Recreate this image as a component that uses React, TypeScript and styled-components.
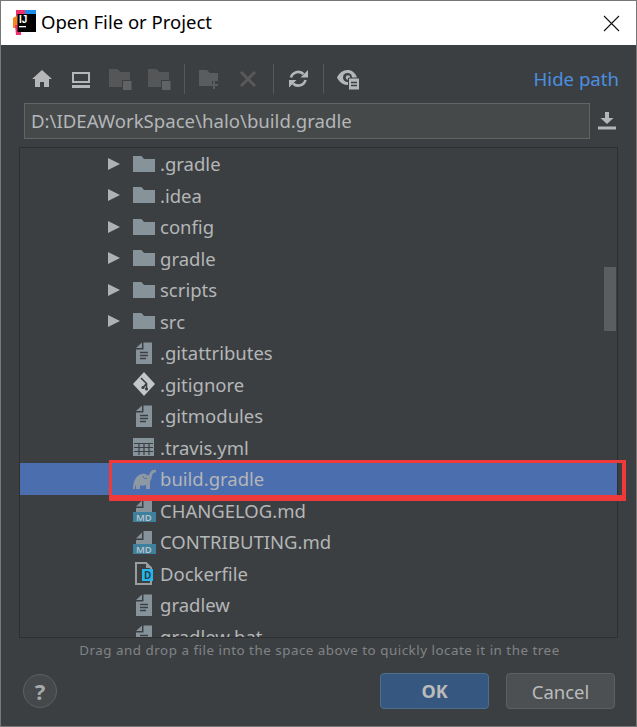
import React, { ReactElement } from "react";
import styled, { createGlobalStyle } from "styled-components";

const GlobalStyle = createGlobalStyle`
  html, body {
    margin: 0;
    padding: 0;
    background: #3c3f41;
  }
`;

const FONT = `"Noto Sans", "Open Sans", sans-serif`;

function Folder() {
  return (
    <svg width="22" height="18" viewBox="0 0 22 18">
      <path d="M0 1h8.500l2.500 3H22V17H0z" fill="#87939a" />
    </svg>
  );
}

function TextFile() {
  return (
    <svg width="22" height="24" viewBox="0 0 22 24">
      <path d="M10.500 1.500H19V23H3V8.500h7.500z" fill="#87939a" />
      <path d="M3 7 9 1.500V7z" fill="#87939a" />
      <path d="M7 11.500h8M7 14.500h8M7 17.500h6" stroke="#3c3f41" strokeWidth="1.300" />
    </svg>
  );
}

function GitFile() {
  return (
    <svg width="22" height="24" viewBox="0 0 22 24">
      <path d="M11 0 22 12 11 24 0 12z" fill="#c4c6c8" />
      <path d="M8 6l5.500 5.500V17M13.500 11.500 10 15.500" stroke="#3c3f41" strokeWidth="1.600" fill="none" />
      <circle cx="10" cy="15.500" r="1.600" fill="#3c3f41" />
      <circle cx="13.500" cy="17" r="1.600" fill="#3c3f41" />
    </svg>
  );
}

function TableFile() {
  return (
    <svg width="22" height="18" viewBox="0 0 22 18">
      <path d="M0 0h21v18H0z" fill="#87939a" />
      <path d="M1 5.500h19M1 9.500h19M1 13.500h19M6 5.500V17M11 5.500V17M16 5.500V17" stroke="#3c3f41" strokeWidth="1.200" />
    </svg>
  );
}

function Elephant() {
  return (
    <svg width="23" height="20" viewBox="0 0 23 20">
      <path
        d="M0 20C0 12 3 6 9 5c2-.4 4 0 5 1 1.500 1 2 .5 3-2 1-2.500 3-4 6-3v2.500c-2.500-.5-3.500 1-4 3.500-.5 3-1.500 4.500-2 6V20h-4v-4c-3 1-5 1-6 0v4H3v-4c-1 1-1 2.500-1 4z"
        fill="#8d98a3"
      />
      <path d="M10 7c.5 2 2 3 4 2.500" stroke="#4b6eaf" strokeWidth="1" fill="none" />
    </svg>
  );
}

function MdFile() {
  return (
    <svg width="23" height="24" viewBox="0 0 23 24">
      <path d="M3 8.500 9 2.500v6z" fill="#87939a" />
      <path d="M10.500 1H19v13H3v-4h7.500z" fill="#87939a" />
      <rect x="0" y="14" width="23" height="10" fill="#3d7f9c" />
      <text x="3" y="22.600" fontSize="9.500" fontWeight="600" fontFamily="Noto Sans, sans-serif" fill="#b9c3c9">
        MD
      </text>
    </svg>
  );
}

function DockerFile() {
  return (
    <svg width="22" height="24" viewBox="0 0 22 24">
      <path d="M3 2h10l5 5v16H3z" fill="none" stroke="#9a9c9e" strokeWidth="2" />
      <path d="M13 1l6 6h-6z" fill="#9a9c9e" />
      <rect x="9" y="8" width="11" height="12" fill="#25b7ea" />
      <text x="11" y="18" fontSize="10" fontWeight="700" fontFamily="Noto Sans, sans-serif" fill="#2b3f4c">
        D
      </text>
    </svg>
  );
}

type Entry = { name: string; kind: "folder" | "text" | "git" | "table" | "gradle" | "md" | "docker"; selected?: boolean };

const ENTRIES: Entry[] = [
  { name: ".gradle", kind: "folder" },
  { name: ".idea", kind: "folder" },
  { name: "config", kind: "folder" },
  { name: "gradle", kind: "folder" },
  { name: "scripts", kind: "folder" },
  { name: "src", kind: "folder" },
  { name: ".gitattributes", kind: "text" },
  { name: ".gitignore", kind: "git" },
  { name: ".gitmodules", kind: "text" },
  { name: ".travis.yml", kind: "table" },
  { name: "build.gradle", kind: "gradle", selected: true },
  { name: "CHANGELOG.md", kind: "md" },
  { name: "CONTRIBUTING.md", kind: "md" },
  { name: "Dockerfile", kind: "docker" },
  { name: "gradlew", kind: "text" },
  { name: "gradlew.bat", kind: "text" },
];

function EntryIcon({ kind }: { kind: Entry["kind"] }) {
  if (kind === "folder") return <Folder />;
  if (kind === "git") return <GitFile />;
  if (kind === "table") return <TableFile />;
  if (kind === "gradle") return <Elephant />;
  if (kind === "md") return <MdFile />;
  if (kind === "docker") return <DockerFile />;
  return <TextFile />;
}

export default function App(): ReactElement {
  return (
    <>
      <GlobalStyle />
      <Dialog>
        <TitleBar>
          <Logo viewBox="0 0 24 24" width="24" height="24">
            <path d="M3 -1h9v9H3z" fill="#f0306d" />
            <path d="M0 7l5-3v13H0z" fill="#f7841f" />
            <path d="M12 -1h11v11H12z" fill="#1f8ceb" />
            <path d="M2 14h6v10H3z" fill="#f0306d" />
            <rect x="4.500" y="3" width="18.500" height="18" fill="#000" />
            <text x="6" y="11.500" fontSize="10" fontWeight="700" fontFamily="Liberation Sans, sans-serif" fill="#fff">
              IJ
            </text>
            <rect x="6" y="15" width="7" height="1.300" fill="#fff" />
          </Logo>
          <Title>Open File or Project</Title>
          <CloseIcon width="17" height="17" viewBox="0 0 17 17">
            <path d="M1 1l15 15M16 1 1 16" stroke="#111" strokeWidth="1.100" fill="none" />
          </CloseIcon>
        </TitleBar>
        <Body>
          <Toolbar>
            <Tools>
              <ToolIcon width="24" height="24" viewBox="0 0 24 24">
                <path d="M12 3 2 12h3v8h5v-5h4v5h5v-8h3z" fill="#b4b6b8" />
              </ToolIcon>
              <ToolIcon width="24" height="24" viewBox="0 0 24 24">
                <path d="M3 5h18v11H3zM5 7v7h14V7z" fill="#b4b6b8" fillRule="evenodd" />
                <path d="M3 18h18v3H3z" fill="#b4b6b8" />
              </ToolIcon>
              <ToolIcon width="24" height="24" viewBox="0 0 24 24">
                <path d="M1 2h8.500l3 3H22v8h-8v7H1z" fill="#545658" />
                <path d="M15 14h8.500v9H15z" fill="#616263" />
              </ToolIcon>
              <ToolIcon width="24" height="24" viewBox="0 0 24 24">
                <path d="M1 2h8.500l3 3H22v8h-8v7H1z" fill="#545658" />
                <path d="M15 14h8.500v9H15z" fill="#616263" />
              </ToolIcon>
              <ToolDivider />
              <ToolIcon width="24" height="24" viewBox="0 0 24 24">
                <path d="M2 3h8l3 3h8v8h-6v5H2z" fill="#5b5c5e" />
                <path d="M18 14v3h3v2h-3v3h-2v-3h-3v-2h3v-3z" fill="#5b5c5e" />
              </ToolIcon>
              <ToolIcon width="24" height="24" viewBox="0 0 24 24">
                <path d="M5 5l14 14M19 5 5 19" stroke="#59595a" strokeWidth="3" fill="none" />
              </ToolIcon>
              <ToolDivider />
              <ToolIcon width="24" height="24" viewBox="0 0 24 24">
                <path d="M5 10.500A7.500 7.500 0 0 1 17.500 7M19.500 13A7.500 7.500 0 0 1 7 16.500" stroke="#b4b6b8" strokeWidth="2.600" fill="none" />
                <path d="M22 3v7.500h-7.500zM3 20.500V13h7.500z" fill="#b4b6b8" />
              </ToolIcon>
              <ToolDivider />
              <ToolIcon width="24" height="24" viewBox="0 0 24 24">
                <path d="M1 10.500C3 6 7 3 11.500 3S19 5.500 21 10.500L11.500 18C7 18 3 15 1 10.500z" fill="#b4b6b8" />
                <circle cx="11.500" cy="10.500" r="4.500" fill="#3c3f41" />
                <circle cx="12" cy="10.500" r="2.200" fill="#b4b6b8" />
                <path d="M12.500 11h11v12h-11z" fill="#b4b6b8" stroke="#3c3f41" strokeWidth="1" />
                <path d="M15 15.500h6M15 18.500h6" stroke="#3c3f41" strokeWidth="1.400" />
              </ToolIcon>
            </Tools>
            <HidePath>Hide path</HidePath>
          </Toolbar>
          <PathRow>
            <PathField>D:\IDEAWorkSpace\halo\build.gradle</PathField>
            <svg width="18" height="18" viewBox="0 0 18 18">
              <path d="M7 0h4v6h4.500L9 12 2.500 6H7z" fill="#b4b6b8" />
              <path d="M0 14.500h18v3H0z" fill="#b4b6b8" />
            </svg>
          </PathRow>
          <TreeArea>
            <Tree>
              {ENTRIES.map((entry) => (
                <Row key={entry.name} $selected={entry.selected}>
                  <Arrow $visible={entry.kind === "folder"} />
                  <IconSlot>
                    <EntryIcon kind={entry.kind} />
                  </IconSlot>
                  <RowName>{entry.name}</RowName>
                </Row>
              ))}
              <ScrollThumb />
            </Tree>
            <Highlight />
          </TreeArea>
          <DropHint>Drag and drop a file into the space above to quickly locate it in the tree</DropHint>
          <Footer>
            <HelpButton>?</HelpButton>
            <Buttons>
              <OkButton>OK</OkButton>
              <CancelButton>Cancel</CancelButton>
            </Buttons>
          </Footer>
        </Body>
      </Dialog>
    </>
  );
}

const Dialog = styled.div`
  display: flex;
  flex-direction: column;
  width: 637px;
  height: 727px;
  box-sizing: border-box;
  border: 1px solid #777;
  font-family: ${FONT};
  overflow: hidden;
`;

const TitleBar = styled.div`
  display: flex;
  align-items: center;
  height: 44px;
  flex-shrink: 0;
  padding: 0 16px 0 12px;
  background: #fff;
`;

const Logo = styled.svg`
  flex-shrink: 0;
  overflow: visible;
`;

const Title = styled.div`
  margin-left: 4px;
  padding-bottom: 3px;
  flex: 1;
  font-size: 18.500px;
  color: #000;
`;

const CloseIcon = styled.svg`
  flex-shrink: 0;
`;

const Body = styled.div`
  flex: 1;
  display: flex;
  flex-direction: column;
  background: #3c3f41;
  min-height: 0;
`;

const Toolbar = styled.div`
  display: flex;
  align-items: center;
  justify-content: space-between;
  height: 58px;
  flex-shrink: 0;
  padding: 9px 17px 0 29px;
  box-sizing: border-box;
`;

const Tools = styled.div`
  display: flex;
  align-items: center;
  gap: 15px;
`;

const ToolIcon = styled.svg`
  flex-shrink: 0;
`;

const ToolDivider = styled.div`
  width: 1px;
  height: 30px;
  margin: 0 -2.500px;
  background: #56585a;
`;

const HidePath = styled.div`
  font-size: 18.600px;
  color: #4b8fe0;
`;

const PathRow = styled.div`
  display: flex;
  align-items: center;
  gap: 8px;
  flex-shrink: 0;
  padding: 0 20px 0 23px;
`;

const PathField = styled.div`
  flex: 1;
  height: 36px;
  box-sizing: border-box;
  border: 1px solid #646464;
  background: #45494a;
  padding-left: 6px;
  font-size: 18.600px;
  line-height: 34px;
  color: #b4b6b8;
`;

const TreeArea = styled.div`
  position: relative;
  flex-shrink: 0;
  margin: 8px 18px 0 18px;
`;

const Tree = styled.div`
  position: relative;
  height: 489px;
  border: 1px solid #2e2f30;
  overflow: hidden;
`;

const Row = styled.div<{ $selected?: boolean }>`
  display: flex;
  align-items: center;
  height: 31.500px;
  padding-left: 88px;
  background: ${(p) => (p.$selected ? "#4b6eaf" : "transparent")};
`;

const Arrow = styled.div<{ $visible: boolean }>`
  width: 0;
  height: 0;
  border-style: solid;
  border-width: 6.500px 0 6.500px 12px;
  border-color: transparent transparent transparent ${(p) => (p.$visible ? "#afb1b3" : "transparent")};
  flex-shrink: 0;
`;

const IconSlot = styled.div`
  width: 24px;
  margin-left: 13px;
  display: flex;
  align-items: center;
  justify-content: flex-start;
  flex-shrink: 0;
`;

const RowName = styled.div`
  margin-left: 3px;
  padding-top: 1px;
  font-size: 18.500px;
  line-height: 22px;
  color: #b4b6b8;
  white-space: nowrap;
`;

const ScrollThumb = styled.div`
  position: absolute;
  top: 119px;
  right: 1px;
  width: 12px;
  height: 64px;
  background: #5b5d5f;
`;

const Highlight = styled.div`
  position: absolute;
  top: 313px;
  left: 90px;
  width: 517px;
  height: 41px;
  box-sizing: border-box;
  border: 3px solid #f03a3a;
  border-right-width: 4px;
  border-bottom-width: 6px;
`;

const DropHint = styled.div`
  margin-top: 3px;
  padding-left: 2px;
  text-align: center;
  font-size: 13.400px;
  line-height: 18px;
  letter-spacing: 0.500px;
  color: #808487;
  flex-shrink: 0;
`;

const Footer = styled.div`
  display: flex;
  align-items: center;
  justify-content: space-between;
  padding: 14px 21px 0 22px;
  flex-shrink: 0;
`;

const HelpButton = styled.div`
  width: 34px;
  height: 34px;
  box-sizing: border-box;
  border: 1px solid #5e6060;
  border-radius: 50%;
  background: #46494b;
  display: flex;
  align-items: center;
  justify-content: center;
  font-size: 22px;
  font-weight: 700;
  color: #a7a9ab;
`;

const Buttons = styled.div`
  display: flex;
  gap: 17px;
`;

const OkButton = styled.div`
  width: 109px;
  height: 36px;
  box-sizing: border-box;
  border: 1px solid #4c708c;
  border-radius: 4px;
  background: #365880;
  display: flex;
  align-items: center;
  justify-content: center;
  font-size: 18px;
  font-weight: 700;
  color: #bbbbbb;
`;

const CancelButton = styled(OkButton)`
  border-color: #5e6060;
  background: #4c5052;
  font-weight: 400;
  font-size: 18.500px;
`;
